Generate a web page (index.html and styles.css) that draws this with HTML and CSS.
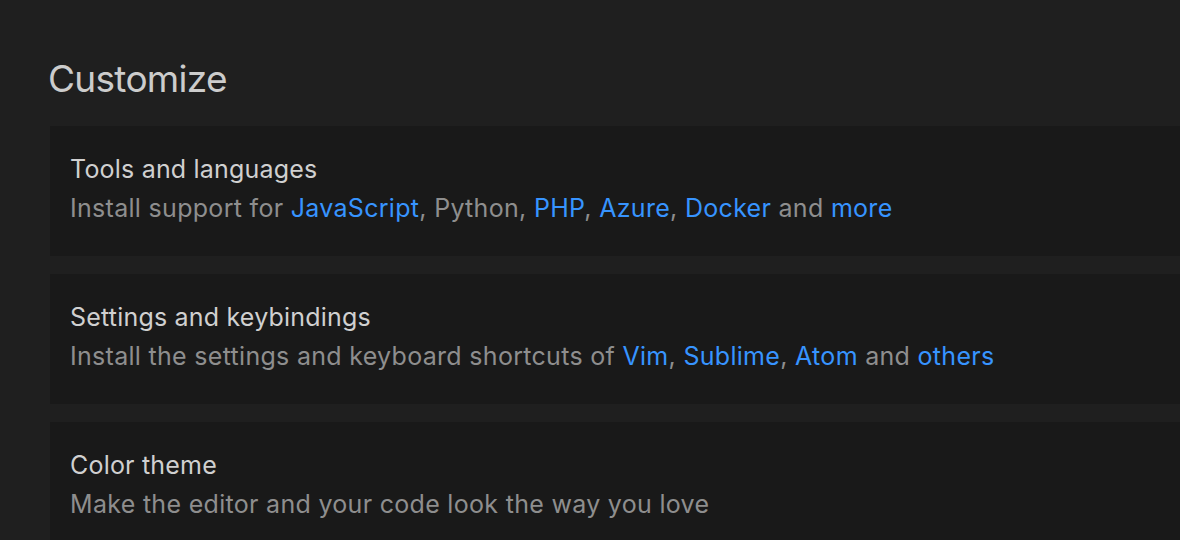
FILE: index.html
```html
<!DOCTYPE html>
<html>
<head>
<meta charset="utf-8">
<link rel="stylesheet" href="styles.css">
</head>
<body>
<div class="page">
  <h1 class="heading">Customize</h1>
  <div class="list">
    <div class="card">
      <div class="title">Tools and languages</div>
      <div class="desc">Install support for <a class="link">JavaScript</a>, Python, <a class="link">PHP</a>, <a class="link">Azure</a>, <a class="link">Docker</a> and <a class="link">more</a></div>
    </div>
    <div class="card">
      <div class="title">Settings and keybindings</div>
      <div class="desc">Install the settings and keyboard shortcuts of <a class="link">Vim</a>, <a class="link">Sublime</a>, <a class="link">Atom</a> and <a class="link">others</a></div>
    </div>
    <div class="card">
      <div class="title">Color theme</div>
      <div class="desc">Make the editor and your code look the way you love</div>
    </div>
  </div>
</div>
</body>
</html>
```

FILE: styles.css
```css
html, body {
  margin: 0;
  padding: 0;
  background: #1f1f1f;
  overflow: hidden;
  width: 1180px;
  height: 540px;
}
body {
  font-family: Inter, "Noto Sans", sans-serif;
  -webkit-font-smoothing: antialiased;
}
.page {
  padding: 57px 0 0 48px;
}
.heading {
  margin: 0;
  font-size: 37px;
  font-weight: 400;
  line-height: 44px;
  color: #cccccc;
  letter-spacing: -0.7px;
}
.list {
  margin: 25px -40px 0 2px;
  display: flex;
  flex-direction: column;
  gap: 18px;
}
.card {
  background: #191919;
  height: 130px;
  box-sizing: border-box;
  padding: 24px 20px 0;
}
.title {
  font-size: 25px;
  line-height: 38px;
  color: #d0d0d0;
  letter-spacing: 0.2px;
}
.desc {
  font-size: 25px;
  line-height: 41px;
  color: #8e8e8e;
  letter-spacing: 0.3px;
}
.link {
  color: #3794ff;
  text-decoration: none;
}
```
